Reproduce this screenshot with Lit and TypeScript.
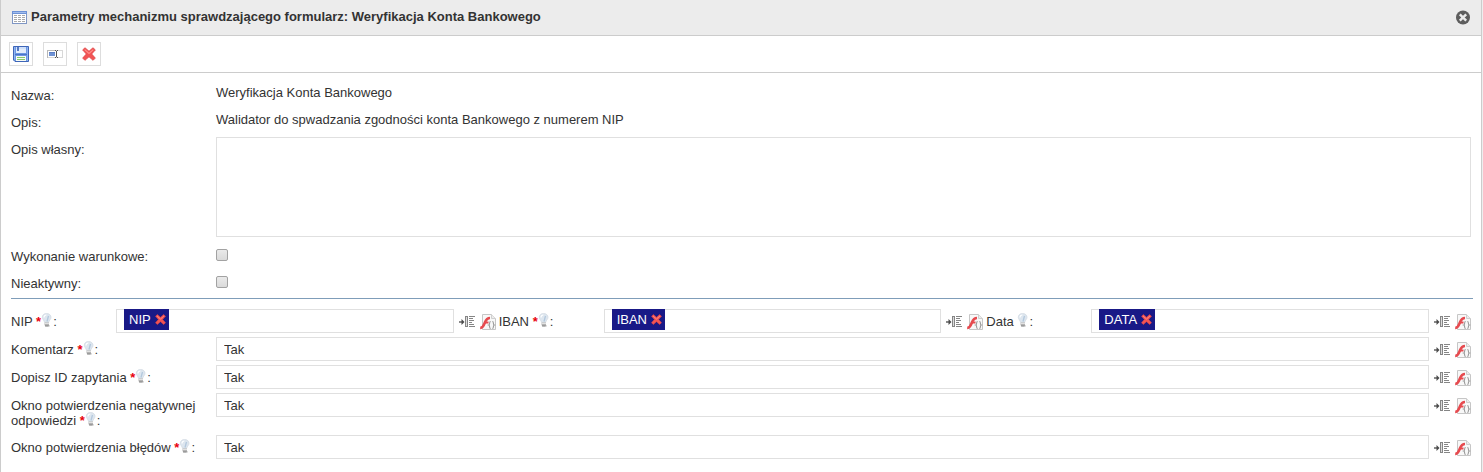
import { LitElement, html, css, svg, nothing } from "lit";
import { customElement } from "lit/decorators.js";

const tableIcon = html`<svg class="icon" viewBox="0 0 16 16" aria-hidden="true">
  <rect x="1.500" y="2.500" width="14" height="11" fill="#fff" stroke="#7f96c4" />
  <path d="M1 1h15v3H1z" fill="#6d92d6" />
  <path d="M2 2h13v1H2z" fill="#a3bdec" />
  <path d="M3 5h3v1H3zm4 0h3v1H7zm4 0h3v1h-3zM3 7h3v1H3zm4 0h3v1H7zm4 0h3v1h-3zM3 9h3v1H3zm4 0h3v1H7zm4 0h3v1h-3zM3 11h3v1H3zm4 0h3v1H7zm4 0h3v1h-3z" fill="#a9a9a9" />
</svg>`;

const saveIcon = html`<svg class="icon" viewBox="0 0 16 16" aria-hidden="true">
  <path d="M.5.5h15v15H2L.5 14z" fill="#6b97e2" stroke="#3f66b8" />
  <path d="M1.500 1v12.500M14.500 1v14" stroke="#8fb4f2" />
  <rect x="3" y="1" width="10" height="6" fill="#e2edfc" />
  <path d="M3 1h10v2H3z" fill="#cfe0fa" />
  <rect x="4" y="1" width="2" height="4" fill="#5479c4" />
  <path d="M2 8.500h12" stroke="#4a74c8" />
  <rect x="3" y="10" width="10" height="5" fill="#f7fbf4" />
  <path d="M4 11h8v1H4zm0 2h8v1H4z" fill="#85cb70" />
</svg>`;

const renameIcon = html`<svg class="icon" viewBox="0 0 16 16" aria-hidden="true">
  <rect x=".5" y="4.500" width="15" height="7" fill="#fff" stroke="#d8d8d8" />
  <path d="M0 4.500h9M.5 4v8" stroke="#b8b8b8" />
  <rect x="2" y="6" width="6" height="4" fill="#6f92d4" />
  <path d="M2 6h6v1H2z" fill="#5a7ec6" />
  <path d="M8 4.500h1M10 4.500h1M8 11.500h1M10 11.500h1M9.500 5v6" stroke="#555" fill="none" />
</svg>`;

const crossShape = svg`
  <path d="M2.800.7L6.500 3.900 10.200.7 12.400 2.700 9 6.500 12.400 10.300 10.300 12.400 6.500 9.100 2.700 12.400.6 10.300 4 6.500.6 2.700z" fill="#f25454" stroke="#dc4446" stroke-width=".7" />
  <path d="M2.500 2.500l4 3.500 4-3.500" fill="none" stroke="#ff8f8a" />`;

const closeIcon = html`<svg class="icon" viewBox="0 0 16 16" aria-hidden="true">
  <circle cx="8" cy="7.500" r="7" fill="#5e5e5e" />
  <path d="M4.800 4.300l6.400 6.400M11.200 4.300l-6.400 6.400" stroke="#ececec" stroke-width="2.400" />
</svg>`;

const bulbIcon = html`<svg class="bulb" viewBox="0 0 12 14" aria-hidden="true">
  <path d="M5.500.5C2.900.5 1.300 2.200 1.300 4.300c0 2 1.900 3 2.200 5h4.200c.3-2 2.300-3 2.300-5C10 2.200 8.300.5 5.500.5z" fill="#dde6ef" stroke="#d3dbe3" stroke-width=".8" />
  <path d="M3 4.500C3 3 4 2 5.300 2" fill="none" stroke="#fff" stroke-width="1.200" />
  <path d="M7.500 3L6 8.500" stroke="#b3c8dd" stroke-width="1.300" />
  <path d="M3.500 9.500h4.500V12L7 13.500H4.500L3.500 12z" fill="#b4b4b4" />
  <path d="M3.500 10.500h4.500" stroke="#e2e2e2" />
  <path d="M4 12.900h4.500" stroke="#8a8a8a" />
</svg>`;

const insertIcon = html`<svg class="icon" viewBox="0 0 16 16" aria-hidden="true">
  <path d="M0 8h4" stroke="#555" stroke-width="1.400" />
  <path d="M2.500 5L5.500 8l-3 3z" fill="#4a4a4a" />
  <rect x="6.500" y="2.500" width="2" height="10" fill="#dcdcdc" stroke="#858585" />
  <path d="M10 2.500h6M10 4.500h4M10 6.500h5M10 8.500h3M10 10.500h5M10 12.500h6" stroke="#858585" />
</svg>`;

const functionIcon = html`<svg class="icon" viewBox="0 0 16 16" aria-hidden="true">
  <path d="M2.500.5h9l4 4v11h-13z" fill="#f8f8f8" stroke="#c6c6c6" />
  <path d="M11.500.5v4h4" fill="#ececec" stroke="#cfcfcf" />
  <path d="M.2 13.800c3.200.2 3.700-3 4.700-5.400C6 5.700 6.800 4 10 4" fill="none" stroke="#e64a4f" stroke-width="2.700" />
  <path d="M4 8.500h4.500" stroke="#e64a4f" stroke-width="2" />
  <path d="M10.700 7.500c-2 0-.3 3-1.900 3.500 1.600.5-.1 3.500 1.900 3.500M12.300 7.500c2 0 .3 3 1.900 3.500-1.600.5.1 3.500-1.900 3.500" fill="none" stroke="#999" stroke-width="1.100" />
</svg>`;

interface TagField { id: string; label: string; tag: string; required: boolean; }
interface TextField { id: string; label: string; value: string; }

@customElement("app-root")
export class AppRoot extends LitElement {
  private tagFields: TagField[] = [
    { id: "nip", label: "NIP", tag: "NIP", required: true },
    { id: "iban", label: "IBAN", tag: "IBAN", required: true },
    { id: "data", label: "Data", tag: "DATA", required: false },
  ];

  private textFields: TextField[] = [
    { id: "komentarz", label: "Komentarz", value: "Tak" },
    { id: "dopisz", label: "Dopisz ID zapytania", value: "Tak" },
    { id: "negatywna", label: "Okno potwierdzenia negatywnej odpowiedzi", value: "Tak" },
    { id: "bledy", label: "Okno potwierdzenia błędów", value: "Tak" },
  ];

  static styles = css`
    :host {
      display: block;
      padding-right: 1px;
      background: #eee;
      color: #333;
      font: 13px/15px "Liberation Sans", Arial, sans-serif;
    }
    * { box-sizing: border-box; }
    button, input, textarea { margin: 0; font: inherit; color: inherit; }
    button { padding: 0; border: 0; background: none; cursor: pointer; }
    .icon { display: block; width: 16px; height: 16px; flex: none; }
    .panel {
      min-height: 100vh;
      border: solid #ccc;
      border-width: 0 1px;
      background: #fff;
    }
    .header {
      display: flex;
      align-items: center;
      gap: 4px;
      height: 36px;
      padding: 0 10px;
      border-bottom: 1px solid #ccc;
      background: #ececec;
    }
    .title { flex: 1; margin: 0; padding-bottom: 2px; font-size: 13px; }
    .toolbar {
      display: flex;
      gap: 10px;
      padding: 6px 8px;
      border-bottom: 1px solid #ccc;
    }
    .tool {
      display: grid;
      place-items: center;
      width: 24px;
      height: 24px;
      border: 1px solid #ddd;
      background: #fff;
    }
    .cross { display: block; width: 14px; height: 14px; }
    .cross.small { width: 11px; height: 11px; }
    .form { padding: 10px 10px 0; }
    .general { display: grid; gap: 5px; }
    .row {
      display: grid;
      grid-template-columns: 205px minmax(0, 1fr);
      min-height: 22px;
    }
    .label { padding: 5px 0 3px; }
    .general .label { padding-bottom: 2px; }
    .value { padding-top: 2px; }
    .notes {
      display: block;
      width: 100%;
      height: 100px;
      margin-bottom: 2px;
      padding: 4px 7px;
      border: 1px solid #e0e0e0;
      background: #fff;
      resize: none;
    }
    .check {
      appearance: none;
      width: 12px;
      height: 12px;
      margin-top: 5px;
      border: 1px solid #a2a2a2;
      border-radius: 2px;
      background: linear-gradient(#eaeaea, #dadada);
    }
    .check:checked { background: #555; }
    .divider { height: 1px; margin: 5px -2px 10px 0; border: 0; background: #7f9db9; }
    .params { display: grid; gap: 4px; }
    .tags { display: grid; grid-template-columns: repeat(3, minmax(0, 1fr)); gap: 3px; }
    .group { display: grid; grid-template-columns: 105px minmax(0, 1fr); }
    .star { color: #e8000d; font-weight: bold; }
    .bulb { width: 12px; height: 14px; margin-top: -2px; vertical-align: -1px; }
    .control { display: flex; align-items: flex-start; gap: 5px; }
    .field {
      flex: 1;
      min-width: 0;
      height: 24px;
      padding: 0 7px;
      border: 1px solid #e0e0e0;
      background: #fff;
    }
    .tagbox { display: flex; }
    .taginput { flex: 1; min-width: 0; border: 0; outline: 0; background: none; }
    .chip {
      display: flex;
      align-items: center;
      gap: 4px;
      height: 21px;
      margin-top: -1px;
      padding: 0 3px 0 5px;
      background: #191987;
      color: #fff;
    }
    .action { padding-top: 5px; }
  `;

  private label(id: string, text: string, required: boolean) {
    return html`<label class="label" for=${id}>${text} ${required ? html`<span class="star">*</span>` : nothing}${bulbIcon}:</label>`;
  }

  private actions() {
    return html`<button class="action" type="button" aria-label="Wstaw">${insertIcon}</button><button class="action" type="button" aria-label="Funkcja">${functionIcon}</button>`;
  }

  private cross(size = "") {
    return html`<svg class="cross ${size}" viewBox="0 0 13 13" aria-hidden="true">${crossShape}</svg>`;
  }

  render() {
    return html`
      <section class="panel">
        <header class="header">
          ${tableIcon}
          <h1 class="title">Parametry mechanizmu sprawdzającego formularz: Weryfikacja Konta Bankowego</h1>
          <button type="button" aria-label="Zamknij">${closeIcon}</button>
        </header>
        <div class="toolbar">
          <button class="tool" type="button" aria-label="Zapisz">${saveIcon}</button>
          <button class="tool" type="button" aria-label="Zmień nazwę">${renameIcon}</button>
          <button class="tool" type="button" aria-label="Usuń">${this.cross()}</button>
        </div>
        <form class="form">
          <div class="general">
            <div class="row"><span class="label">Nazwa:</span><span class="value">Weryfikacja Konta Bankowego</span></div>
            <div class="row"><span class="label">Opis:</span><span class="value">Walidator do spwadzania zgodności konta Bankowego z numerem NIP</span></div>
            <div class="row"><label class="label" for="notes">Opis własny:</label><textarea class="notes" id="notes"></textarea></div>
            <div class="row"><label class="label" for="conditional">Wykonanie warunkowe:</label><input class="check" id="conditional" type="checkbox" /></div>
            <div class="row"><label class="label" for="inactive">Nieaktywny:</label><input class="check" id="inactive" type="checkbox" /></div>
          </div>
          <hr class="divider" />
          <div class="params">
            <div class="tags">
              ${this.tagFields.map((f) => html`
                <div class="group">
                  ${this.label(f.id, f.label, f.required)}
                  <div class="control">
                    <div class="field tagbox">
                      <span class="chip">${f.tag}<button type="button" aria-label="Usuń ${f.tag}">${this.cross("small")}</button></span>
                      <input class="taginput" id=${f.id} type="text" />
                    </div>
                    ${this.actions()}
                  </div>
                </div>`)}
            </div>
            ${this.textFields.map((f) => html`
              <div class="row">
                ${this.label(f.id, f.label, true)}
                <div class="control"><input class="field" id=${f.id} type="text" .value=${f.value} />${this.actions()}</div>
              </div>`)}
          </div>
        </form>
      </section>`;
  }
}
